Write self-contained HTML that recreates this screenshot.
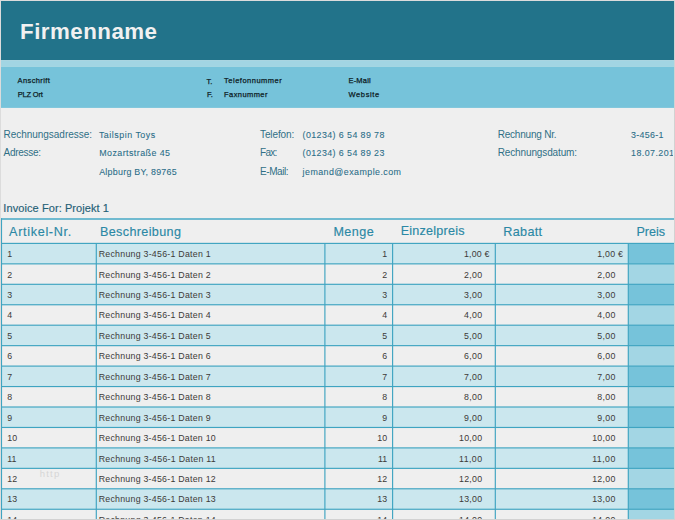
<!DOCTYPE html>
<html lang="de"><head><meta charset="utf-8"><title>Rechnung</title>
<style>
html,body{margin:0;padding:0;}
body{width:675px;height:520px;overflow:hidden;background:#efefef;position:relative;font-family:"Liberation Sans",sans-serif;}
#page{position:absolute;left:0;top:0;width:675px;height:520px;overflow:hidden;background:#efefef;}
.b{position:absolute;}
.t{position:absolute;white-space:nowrap;line-height:0;}
.title{font-size:22.3px;color:#f1f1f1;font-weight:bold;}
.sm{font-size:7.5px;color:#0e1d26;-webkit-text-stroke:0.25px #0e1d26;}
.lab{font-size:10px;color:#2f6f86;}
.val{font-size:8.9px;color:#2a6d88;-webkit-text-stroke:0.08px #2a6d88;}
.inv{font-size:11px;color:#1f6076;-webkit-text-stroke:0.15px #1f6076;}
.th{font-size:12.6px;color:#2b88a5;-webkit-text-stroke:0.15px #2b88a5;}
.td{font-size:8.8px;color:#3d3a38;}
.wm{font-size:9.5px;color:#d6d6d6;}
</style></head><body><div id="page">

<svg class="b" style="left:0;top:0" width="675" height="520" viewBox="0 0 675 520"><rect x="0.00" y="0.00" width="675.00" height="60.20" fill="#22738a"/><rect x="0.00" y="60.20" width="675.00" height="6.70" fill="#a2d5e3"/><rect x="0.00" y="66.90" width="675.00" height="41.00" fill="#76c3da"/><rect x="1.00" y="243.40" width="627.30" height="20.45" fill="#cbe7ee"/><rect x="628.30" y="243.40" width="46.70" height="20.45" fill="#76c3da"/><rect x="628.30" y="263.85" width="46.70" height="20.45" fill="#a3d6e4"/><rect x="1.00" y="284.30" width="627.30" height="20.45" fill="#cbe7ee"/><rect x="628.30" y="284.30" width="46.70" height="20.45" fill="#76c3da"/><rect x="628.30" y="304.75" width="46.70" height="20.45" fill="#a3d6e4"/><rect x="1.00" y="325.20" width="627.30" height="20.45" fill="#cbe7ee"/><rect x="628.30" y="325.20" width="46.70" height="20.45" fill="#76c3da"/><rect x="628.30" y="345.65" width="46.70" height="20.45" fill="#a3d6e4"/><rect x="1.00" y="366.10" width="627.30" height="20.45" fill="#cbe7ee"/><rect x="628.30" y="366.10" width="46.70" height="20.45" fill="#76c3da"/><rect x="628.30" y="386.55" width="46.70" height="20.45" fill="#a3d6e4"/><rect x="1.00" y="407.00" width="627.30" height="20.45" fill="#cbe7ee"/><rect x="628.30" y="407.00" width="46.70" height="20.45" fill="#76c3da"/><rect x="628.30" y="427.45" width="46.70" height="20.45" fill="#a3d6e4"/><rect x="1.00" y="447.90" width="627.30" height="20.45" fill="#cbe7ee"/><rect x="628.30" y="447.90" width="46.70" height="20.45" fill="#76c3da"/><rect x="628.30" y="468.35" width="46.70" height="20.45" fill="#a3d6e4"/><rect x="1.00" y="488.80" width="627.30" height="20.45" fill="#cbe7ee"/><rect x="628.30" y="488.80" width="46.70" height="20.45" fill="#76c3da"/><rect x="628.30" y="509.25" width="46.70" height="20.45" fill="#a3d6e4"/><rect x="1.00" y="218.10" width="674.00" height="1.80" fill="#62b4cc"/><rect x="1.00" y="242.83" width="674.00" height="1.15" fill="#3fa4c1"/><rect x="1.00" y="263.28" width="674.00" height="1.15" fill="#3fa4c1"/><rect x="1.00" y="283.73" width="674.00" height="1.15" fill="#3fa4c1"/><rect x="1.00" y="304.18" width="674.00" height="1.15" fill="#3fa4c1"/><rect x="1.00" y="324.62" width="674.00" height="1.15" fill="#3fa4c1"/><rect x="1.00" y="345.07" width="674.00" height="1.15" fill="#3fa4c1"/><rect x="1.00" y="365.53" width="674.00" height="1.15" fill="#3fa4c1"/><rect x="1.00" y="385.98" width="674.00" height="1.15" fill="#3fa4c1"/><rect x="1.00" y="406.43" width="674.00" height="1.15" fill="#3fa4c1"/><rect x="1.00" y="426.88" width="674.00" height="1.15" fill="#3fa4c1"/><rect x="1.00" y="447.32" width="674.00" height="1.15" fill="#3fa4c1"/><rect x="1.00" y="467.78" width="674.00" height="1.15" fill="#3fa4c1"/><rect x="1.00" y="488.22" width="674.00" height="1.15" fill="#3fa4c1"/><rect x="1.00" y="508.68" width="674.00" height="1.15" fill="#3fa4c1"/><rect x="1.00" y="529.12" width="674.00" height="1.15" fill="#3fa4c1"/><rect x="0.93" y="218.20" width="1.15" height="302.00" fill="#3fa4c1"/><rect x="95.72" y="243.40" width="1.15" height="290.00" fill="#3fa4c1"/><rect x="324.32" y="243.40" width="1.15" height="290.00" fill="#3fa4c1"/><rect x="392.03" y="243.40" width="1.15" height="290.00" fill="#3fa4c1"/><rect x="494.73" y="243.40" width="1.15" height="290.00" fill="#3fa4c1"/><rect x="627.72" y="243.40" width="1.15" height="290.00" fill="#3fa4c1"/></svg>
<span class="t title" style="left:20.1px;top:31.75px;letter-spacing:0.478px;">Firmenname</span>
<span class="t sm" style="left:17.6px;top:80.75px;letter-spacing:0.377px;">Anschrift</span>
<span class="t sm" style="left:17.8px;top:94.75px;letter-spacing:-0.194px;">PLZ Ort</span>
<span class="t sm" style="left:206.5px;top:81.75px;">T.</span>
<span class="t sm" style="left:224.1px;top:80.75px;letter-spacing:0.500px;">Telefonnummer</span>
<span class="t sm" style="left:206.9px;top:94.75px;">F.</span>
<span class="t sm" style="left:224.1px;top:94.75px;letter-spacing:0.411px;">Faxnummer</span>
<span class="t sm" style="left:348.5px;top:80.75px;letter-spacing:0.187px;">E-Mail</span>
<span class="t sm" style="left:348.5px;top:94.75px;letter-spacing:0.622px;">Website</span>
<span class="t lab" style="left:3.5px;top:134.75px;letter-spacing:-0.028px;">Rechnungsadresse:</span>
<span class="t lab" style="left:3.5px;top:152.75px;letter-spacing:-0.281px;">Adresse:</span>
<span class="t val" style="left:98.9px;top:135.25px;letter-spacing:0.512px;">Tailspin Toys</span>
<span class="t val" style="left:99.2px;top:153.25px;letter-spacing:0.441px;">Mozartstraße 45</span>
<span class="t val" style="left:99.2px;top:172.25px;letter-spacing:0.258px;">Alpburg BY, 89765</span>
<span class="t lab" style="left:260.0px;top:134.75px;letter-spacing:-0.104px;">Telefon:</span>
<span class="t lab" style="left:260.0px;top:152.75px;letter-spacing:-0.718px;">Fax:</span>
<span class="t lab" style="left:260.0px;top:171.75px;letter-spacing:-0.421px;">E-Mail:</span>
<span class="t val" style="left:302.6px;top:135.25px;letter-spacing:0.399px;">(01234) 6 54 89 78</span>
<span class="t val" style="left:302.6px;top:153.25px;letter-spacing:0.399px;">(01234) 6 54 89 23</span>
<span class="t val" style="left:302.6px;top:172.25px;letter-spacing:0.441px;">jemand@example.com</span>
<span class="t lab" style="left:497.7px;top:134.75px;letter-spacing:-0.205px;">Rechnung Nr.</span>
<span class="t lab" style="left:497.7px;top:152.75px;letter-spacing:-0.127px;">Rechnungsdatum:</span>
<span class="t val" style="left:631.1px;top:135.25px;letter-spacing:0.301px;">3-456-1</span>
<span class="t val" style="left:631.1px;top:153.25px;letter-spacing:0.420px;">18.07.2013</span>
<span class="t inv" style="left:3.3px;top:208.25px;letter-spacing:0.084px;">Invoice For: Projekt 1</span>
<span class="t th" style="left:9.1px;top:232.25px;letter-spacing:0.682px;">Artikel-Nr.</span>
<span class="t th" style="left:100.0px;top:232.25px;letter-spacing:0.353px;">Beschreibung</span>
<span class="t th" style="left:333.4px;top:232.25px;letter-spacing:0.471px;">Menge</span>
<span class="t th" style="left:400.7px;top:231.25px;letter-spacing:0.229px;">Einzelpreis</span>
<span class="t th" style="left:503.3px;top:232.25px;letter-spacing:0.338px;">Rabatt</span>
<span class="t th" style="left:636.4px;top:232.25px;">Preis</span>
<span class="t td" style="left:7.3px;top:254.25px;">1</span>
<span class="t td" style="left:98.7px;top:254.25px;letter-spacing:0.255px;">Rechnung 3-456-1 Daten 1</span>
<span class="t td" style="right:287.9px;top:254.25px;">1</span>
<span class="t td" style="left:464.0px;top:254.25px;letter-spacing:0.206px;">1,00 €</span>
<span class="t td" style="left:597.2px;top:254.25px;letter-spacing:0.246px;">1,00 €</span>
<span class="t td" style="left:7.3px;top:275.25px;">2</span>
<span class="t td" style="left:98.7px;top:275.25px;letter-spacing:0.255px;">Rechnung 3-456-1 Daten 2</span>
<span class="t td" style="right:287.9px;top:275.25px;">2</span>
<span class="t td" style="left:464.0px;top:275.25px;letter-spacing:0.325px;">2,00</span>
<span class="t td" style="left:597.2px;top:275.25px;letter-spacing:0.325px;">2,00</span>
<span class="t td" style="left:7.3px;top:295.25px;">3</span>
<span class="t td" style="left:98.7px;top:295.25px;letter-spacing:0.255px;">Rechnung 3-456-1 Daten 3</span>
<span class="t td" style="right:287.9px;top:295.25px;">3</span>
<span class="t td" style="left:464.0px;top:295.25px;letter-spacing:0.325px;">3,00</span>
<span class="t td" style="left:597.2px;top:295.25px;letter-spacing:0.325px;">3,00</span>
<span class="t td" style="left:7.3px;top:315.25px;">4</span>
<span class="t td" style="left:98.7px;top:315.25px;letter-spacing:0.255px;">Rechnung 3-456-1 Daten 4</span>
<span class="t td" style="right:287.9px;top:315.25px;">4</span>
<span class="t td" style="left:464.0px;top:315.25px;letter-spacing:0.325px;">4,00</span>
<span class="t td" style="left:597.2px;top:315.25px;letter-spacing:0.325px;">4,00</span>
<span class="t td" style="left:7.3px;top:336.25px;">5</span>
<span class="t td" style="left:98.7px;top:336.25px;letter-spacing:0.255px;">Rechnung 3-456-1 Daten 5</span>
<span class="t td" style="right:287.9px;top:336.25px;">5</span>
<span class="t td" style="left:464.0px;top:336.25px;letter-spacing:0.325px;">5,00</span>
<span class="t td" style="left:597.2px;top:336.25px;letter-spacing:0.325px;">5,00</span>
<span class="t td" style="left:7.3px;top:356.25px;">6</span>
<span class="t td" style="left:98.7px;top:356.25px;letter-spacing:0.255px;">Rechnung 3-456-1 Daten 6</span>
<span class="t td" style="right:287.9px;top:356.25px;">6</span>
<span class="t td" style="left:464.0px;top:356.25px;letter-spacing:0.325px;">6,00</span>
<span class="t td" style="left:597.2px;top:356.25px;letter-spacing:0.325px;">6,00</span>
<span class="t td" style="left:7.3px;top:377.25px;">7</span>
<span class="t td" style="left:98.7px;top:377.25px;letter-spacing:0.255px;">Rechnung 3-456-1 Daten 7</span>
<span class="t td" style="right:287.9px;top:377.25px;">7</span>
<span class="t td" style="left:464.0px;top:377.25px;letter-spacing:0.325px;">7,00</span>
<span class="t td" style="left:597.2px;top:377.25px;letter-spacing:0.325px;">7,00</span>
<span class="t td" style="left:7.3px;top:397.25px;">8</span>
<span class="t td" style="left:98.7px;top:397.25px;letter-spacing:0.255px;">Rechnung 3-456-1 Daten 8</span>
<span class="t td" style="right:287.9px;top:397.25px;">8</span>
<span class="t td" style="left:464.0px;top:397.25px;letter-spacing:0.325px;">8,00</span>
<span class="t td" style="left:597.2px;top:397.25px;letter-spacing:0.325px;">8,00</span>
<span class="t td" style="left:7.3px;top:418.25px;">9</span>
<span class="t td" style="left:98.7px;top:418.25px;letter-spacing:0.255px;">Rechnung 3-456-1 Daten 9</span>
<span class="t td" style="right:287.9px;top:418.25px;">9</span>
<span class="t td" style="left:464.0px;top:418.25px;letter-spacing:0.325px;">9,00</span>
<span class="t td" style="left:597.2px;top:418.25px;letter-spacing:0.325px;">9,00</span>
<span class="t td" style="left:7.3px;top:438.25px;">10</span>
<span class="t td" style="left:98.7px;top:438.25px;letter-spacing:0.249px;">Rechnung 3-456-1 Daten 10</span>
<span class="t td" style="right:287.9px;top:438.25px;">10</span>
<span class="t td" style="left:459.0px;top:438.25px;letter-spacing:0.271px;">10,00</span>
<span class="t td" style="left:592.2px;top:438.25px;letter-spacing:0.271px;">10,00</span>
<span class="t td" style="left:7.3px;top:459.25px;">11</span>
<span class="t td" style="left:98.7px;top:459.25px;letter-spacing:0.276px;">Rechnung 3-456-1 Daten 11</span>
<span class="t td" style="right:287.9px;top:459.25px;">11</span>
<span class="t td" style="left:459.0px;top:459.25px;letter-spacing:0.431px;">11,00</span>
<span class="t td" style="left:592.2px;top:459.25px;letter-spacing:0.431px;">11,00</span>
<span class="t td" style="left:7.3px;top:479.25px;">12</span>
<span class="t td" style="left:98.7px;top:479.25px;letter-spacing:0.249px;">Rechnung 3-456-1 Daten 12</span>
<span class="t td" style="right:287.9px;top:479.25px;">12</span>
<span class="t td" style="left:459.0px;top:479.25px;letter-spacing:0.271px;">12,00</span>
<span class="t td" style="left:592.2px;top:479.25px;letter-spacing:0.271px;">12,00</span>
<span class="t td" style="left:7.3px;top:499.25px;">13</span>
<span class="t td" style="left:98.7px;top:499.25px;letter-spacing:0.249px;">Rechnung 3-456-1 Daten 13</span>
<span class="t td" style="right:287.9px;top:499.25px;">13</span>
<span class="t td" style="left:459.0px;top:499.25px;letter-spacing:0.271px;">13,00</span>
<span class="t td" style="left:592.2px;top:499.25px;letter-spacing:0.271px;">13,00</span>
<span class="t td" style="left:7.3px;top:520.25px;">14</span>
<span class="t td" style="left:98.7px;top:520.25px;letter-spacing:0.249px;">Rechnung 3-456-1 Daten 14</span>
<span class="t td" style="right:287.9px;top:520.25px;">14</span>
<span class="t td" style="left:459.0px;top:520.25px;letter-spacing:0.271px;">14,00</span>
<span class="t td" style="left:592.2px;top:520.25px;letter-spacing:0.271px;">14,00</span>
<span class="t wm" style="left:39.7px;top:473.75px;letter-spacing:1.214px;">http</span>
<div class="b" style="left:673.2px;top:120px;width:2px;height:60px;background:#efefef"></div>
<div class="b" style="left:0;top:0;width:673px;height:518px;border:1px solid #dcdcdc;border-right-color:#d2d2d2;border-bottom-color:#d2d2d2;"></div>
</div></body></html>
